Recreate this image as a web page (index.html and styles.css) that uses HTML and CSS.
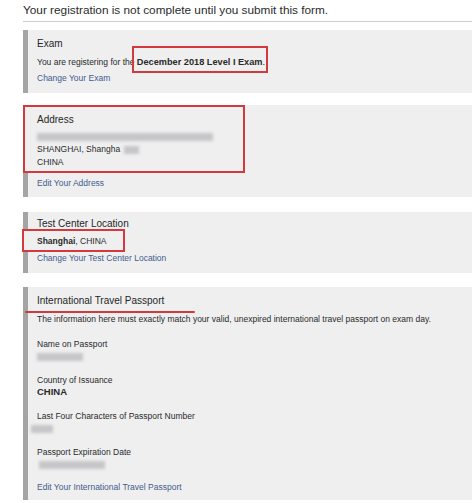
FILE: index.html
```html
<!DOCTYPE html>
<html>
<head>
<meta charset="utf-8">
<link rel="stylesheet" href="styles.css">
</head>
<body>
<div class="page">
  <div class="heading">Your registration is not complete until you submit this form.</div>

  <section class="card card-exam">
    <div class="card-title">Exam</div>
    <div class="text">You are registering for the <span class="mark-exam"><b>December 2018 Level I Exam</b>.</span></div>
    <div class="text"><a class="link">Change Your Exam</a></div>
  </section>

  <section class="card card-address">
    <div class="addr-box">
      <div class="card-title">Address</div>
      <div class="addr-line"><span class="blur blur-addr"></span></div>
      <div class="addr-line">SHANGHAI, Shangha<span class="blur blur-city"></span></div>
      <div class="addr-line">CHINA</div>
    </div>
    <div class="text link-gap"><a class="link">Edit Your Address</a></div>
  </section>

  <section class="card card-center">
    <div class="card-title">Test Center Location</div>
    <div class="text mark-line"><span class="mark-text"><b>Shanghai</b>, CHINA</span></div>
    <div class="text"><a class="link">Change Your Test Center Location</a></div>
  </section>

  <section class="card card-passport">
    <div class="card-title"><span class="underlined">International Travel Passport</span></div>
    <div class="text">The information here must exactly match your valid, unexpired international travel passport on exam day.</div>
    <div class="field">
      <div class="label">Name on Passport</div>
      <div class="value"><span class="blur blur-name"></span></div>
    </div>
    <div class="field">
      <div class="label">Country of Issuance</div>
      <div class="value value-strong">CHINA</div>
    </div>
    <div class="field">
      <div class="label">Last Four Characters of Passport Number</div>
      <div class="value"><span class="blur blur-four"></span></div>
    </div>
    <div class="field">
      <div class="label">Passport Expiration Date</div>
      <div class="value"><span class="blur blur-date"></span></div>
    </div>
    <div class="label link-last"><a class="link">Edit Your International Travel Passport</a></div>
  </section>
</div>
</body>
</html>
```
FILE: styles.css
```css
html, body {
  margin: 0;
  padding: 0;
  background: #ffffff;
}
body {
  font-family: "Liberation Sans", Arial, sans-serif;
  color: #2a2a2a;
}
.page {
  margin-left: 23px;
  width: 449px;
}
.heading {
  font-size: 11.8px;
  line-height: 21px;
  color: #2b2b2b;
  border-bottom: 1px solid #cdcdcd;
  margin-bottom: 8px;
}
.card {
  position: relative;
  background: #efeff0;
  border-left: 5px solid #a4a4a4;
  padding: 4px 10px 7px 9px;
  margin-bottom: 14px;
}
.card-exam { margin-bottom: 13px; }
.card-address { padding-top: 0; padding-bottom: 6px; margin-bottom: 15px; }
.card-center { padding-top: 3px; padding-bottom: 6px; }
.card-center .card-title { line-height: 18px; }
.card-center .text { line-height: 17px; }

.card-title {
  font-size: 10px;
  line-height: 20px;
  color: #262626;
}
.text {
  font-size: 8.5px;
  line-height: 16px;
}
.link {
  color: #3f5c8c;
  text-decoration: none;
}

/* red annotation around exam name */
.mark-exam {
  position: relative;
  font-size: 9.2px;
}
.mark-exam::after {
  content: "";
  position: absolute;
  left: -5px;
  right: -3px;
  top: -11px;
  bottom: -6px;
  border: 2px solid #d23a3f;
}

/* address annotation */
.addr-box {
  background: #efeff0;
  border: 2px solid #d23a3f;
  margin: -1px 0 0 -14px;
  padding: 3px 0 2px 12px;
  width: 222px;
  box-sizing: border-box;
}
.addr-line {
  font-size: 8.5px;
  line-height: 13px;
}
.link-gap { margin-top: 2px; }

/* test center annotation */
.mark-line { position: relative; }
.mark-line::before {
  content: "";
  position: absolute;
  left: -15px;
  width: 103px;
  top: -4px;
  height: 23px;
  box-sizing: border-box;
  background: #efeff0;
  border: 2px solid #d23a3f;
}
.mark-text { position: relative; }

/* passport */
.underlined { position: relative; }
.underlined::after {
  content: "";
  position: absolute;
  left: -12px;
  width: 170px;
  top: 16px;
  height: 2px;
  border-radius: 1px;
  background: #d23a3f;
}
.field { margin-top: 11px; }
.field + .field { margin-top: 12px; }
.label, .value {
  font-size: 8.5px;
  line-height: 12px;
}
.value-strong {
  font-size: 9.5px;
  font-weight: bold;
}
.link-last { margin-top: 11px; }

.blur {
  display: inline-block;
  height: 8px;
  background: #c6c6c9;
  filter: blur(1.6px);
  vertical-align: middle;
}
.blur-addr { width: 176px; }
.blur-city { width: 15px; margin-left: 4px; }
.blur-name { width: 46px; }
.blur-four { width: 22px; margin-left: -6px; }
.blur-date { width: 66px; margin-left: 2px; }
```
